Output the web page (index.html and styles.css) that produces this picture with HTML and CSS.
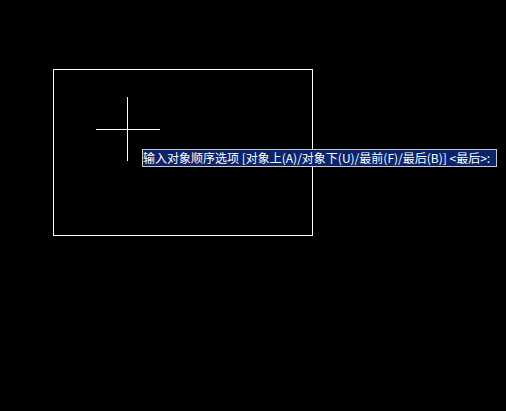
FILE: index.html
```html
<!DOCTYPE html>
<html>
<head>
<meta charset="utf-8">
<link rel="stylesheet" href="styles.css">
</head>
<body>
<div class="canvas">
  <div class="rect"></div>
  <div class="cross-v"></div>
  <div class="cross-h"></div>
  <div class="prompt">输入对象顺序选项 [对象上(A)/对象下(U)/最前(F)/最后(B)] &lt;最后&gt;:</div>
</div>
</body>
</html>
```
FILE: styles.css
```css
html, body {
  margin: 0;
  padding: 0;
  background: #000;
}
.canvas {
  position: relative;
  width: 506px;
  height: 411px;
  background: #000;
  overflow: hidden;
}
.rect {
  position: absolute;
  left: 53px;
  top: 69px;
  width: 260px;
  height: 167px;
  box-sizing: border-box;
  border: 1px solid #fff;
}
.cross-v {
  position: absolute;
  left: 127px;
  top: 97px;
  width: 1px;
  height: 64px;
  background: #fff;
}
.cross-h {
  position: absolute;
  left: 96px;
  top: 129px;
  width: 64px;
  height: 1px;
  background: #fff;
}
.prompt {
  position: absolute;
  left: 142px;
  top: 149px;
  width: 355px;
  height: 18px;
  box-sizing: border-box;
  border: 1px solid #c8c8c8;
  background: #0a246a;
  color: #fff;
  font-family: "Noto Sans CJK SC", "Liberation Sans", sans-serif;
  font-size: 12px;
  line-height: 16px;
  padding-left: 0;
  white-space: nowrap;
  overflow: hidden;
}
```
